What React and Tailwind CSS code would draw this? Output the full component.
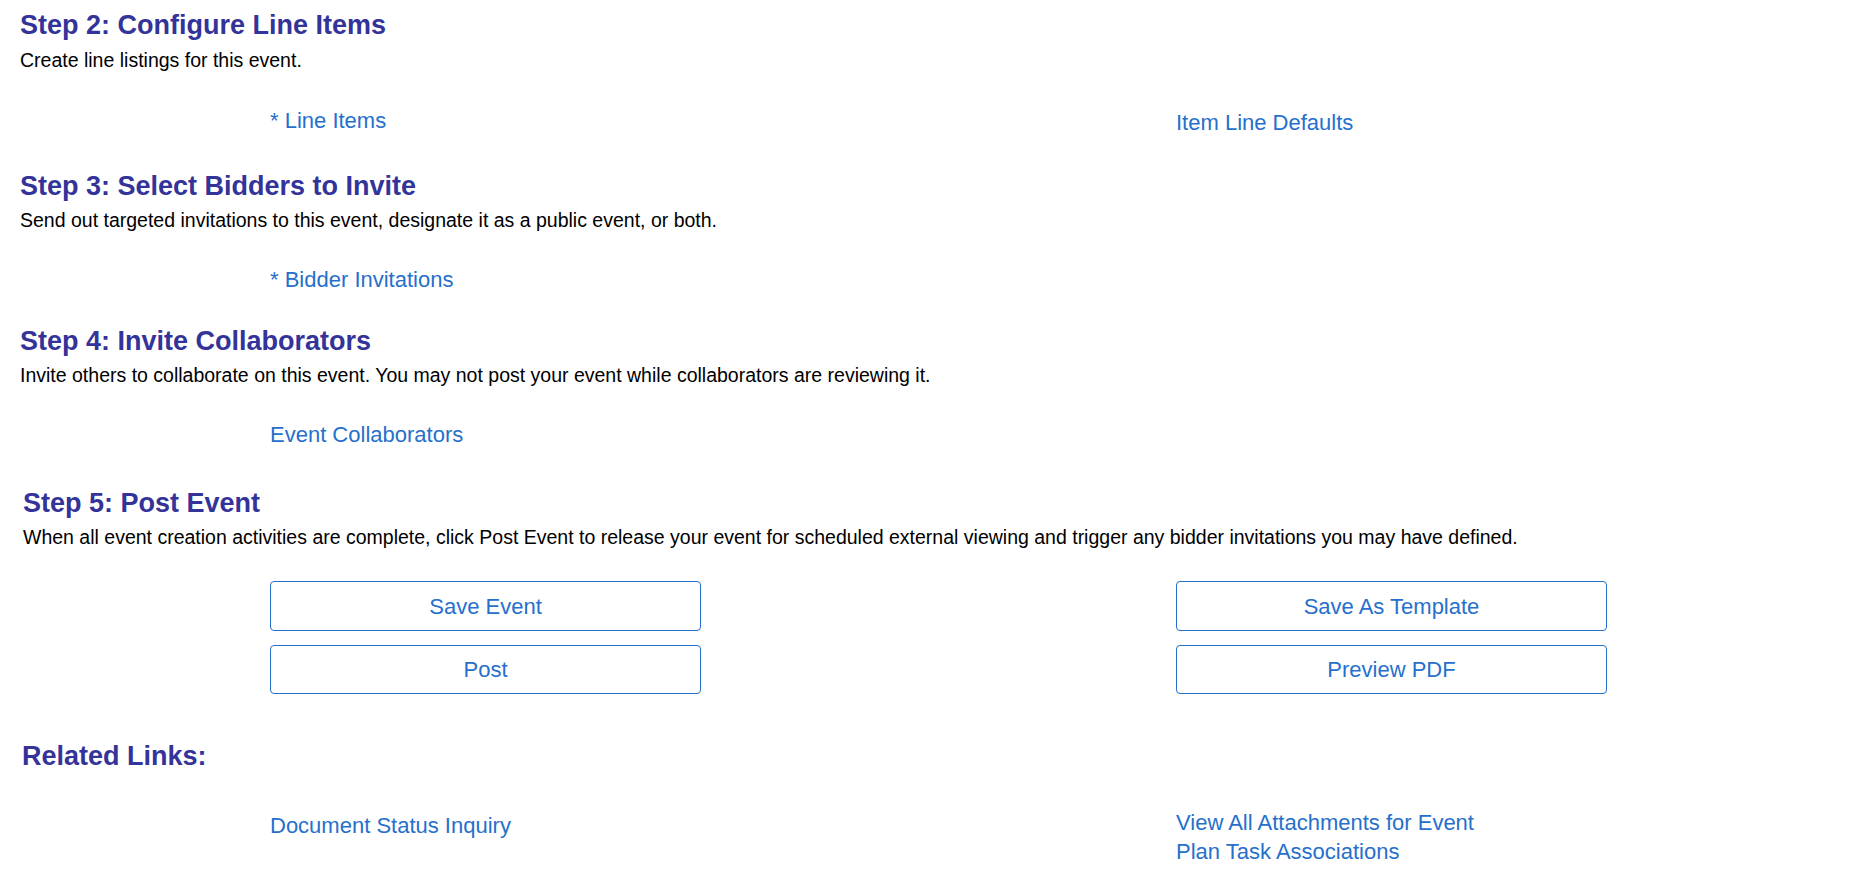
// Event wizard: steps 2-5 and related links

const HEADING = 'text-[27px] font-bold leading-[32px] text-[#333399]'
const NOTE = 'text-[19.5px] leading-[24px] text-black'
const LINK = 'text-[22px] leading-[28px] text-[#2670cc] hover:underline'

function LinkRow({ left, right, className = '' }) {
  return (
    <div className={`grid grid-cols-[250px_906px_1fr] ${className}`}>
      <div />
      <div>{left && <a href="#" className={LINK}>{left}</a>}</div>
      <div className="pt-[2px]">{right && <a href="#" className={LINK}>{right}</a>}</div>
    </div>
  )
}

function Button({ children, className = '' }) {
  return (
    <button
      type="button"
      className={`w-[431px] rounded-[4px] border border-[#2670cc] bg-white text-center text-[22px] text-[#2670cc] ${className}`}
    >
      {children}
    </button>
  )
}

export default function App() {
  return (
    <div
      className="min-h-screen bg-white pt-[9px] pl-[20px]"
      style={{ fontFamily: '"Liberation Sans", Arial, sans-serif' }}
    >
      {/* Step 2 */}
      <h2 className={HEADING}>Step 2: Configure Line Items</h2>
      <p className={`${NOTE} mt-[7px]`}>Create line listings for this event.</p>
      <LinkRow className="mt-[35px]" left="* Line Items" right="Item Line Defaults" />

      {/* Step 3 */}
      <h2 className={`${HEADING} mt-[33px]`}>Step 3: Select Bidders to Invite</h2>
      <p className={`${NOTE} mt-[6px]`}>
        Send out targeted invitations to this event, designate it as a public event, or both.
      </p>
      <LinkRow className="mt-[34px]" left="* Bidder Invitations" />

      {/* Step 4 */}
      <h2 className={`${HEADING} mt-[31px]`}>Step 4: Invite Collaborators</h2>
      <p className={`${NOTE} mt-[6px]`}>
        Invite others to collaborate on this event. You may not post your event while collaborators are reviewing it.
      </p>
      <LinkRow className="mt-[34px]" left="Event Collaborators" />

      {/* Step 5 */}
      <div className="ml-[3px]">
        <h2 className={`${HEADING} mt-[38px]`}>Step 5: Post Event</h2>
        <p className={`${NOTE} mt-[6px]`}>
          When all event creation activities are complete, click Post Event to release your event for scheduled external viewing and trigger any bidder invitations you may have defined.
        </p>
      </div>
      <div className="mt-[32px] grid grid-cols-[250px_906px_1fr] gap-y-[14px]">
        <div />
        <Button className="h-[50px]">Save Event</Button>
        <Button className="h-[50px]">Save As Template</Button>
        <div />
        <Button className="h-[49px]">Post</Button>
        <Button className="h-[49px]">Preview PDF</Button>
      </div>

      {/* Related links */}
      <h2 className={`${HEADING} mt-[46px] ml-[2px]`}>Related Links:</h2>
      <div className="mt-[36px] grid grid-cols-[250px_906px_1fr] pb-[20px]">
        <div />
        <div className="pt-[4px]">
          <a href="#" className={LINK}>Document Status Inquiry</a>
        </div>
        <div className="flex flex-col items-start text-[22px] leading-[29px]">
          <a href="#" className="text-[#2670cc] hover:underline">View All Attachments for Event</a>
          <a href="#" className="text-[#2670cc] hover:underline">Plan Task Associations</a>
        </div>
      </div>
    </div>
  )
}
